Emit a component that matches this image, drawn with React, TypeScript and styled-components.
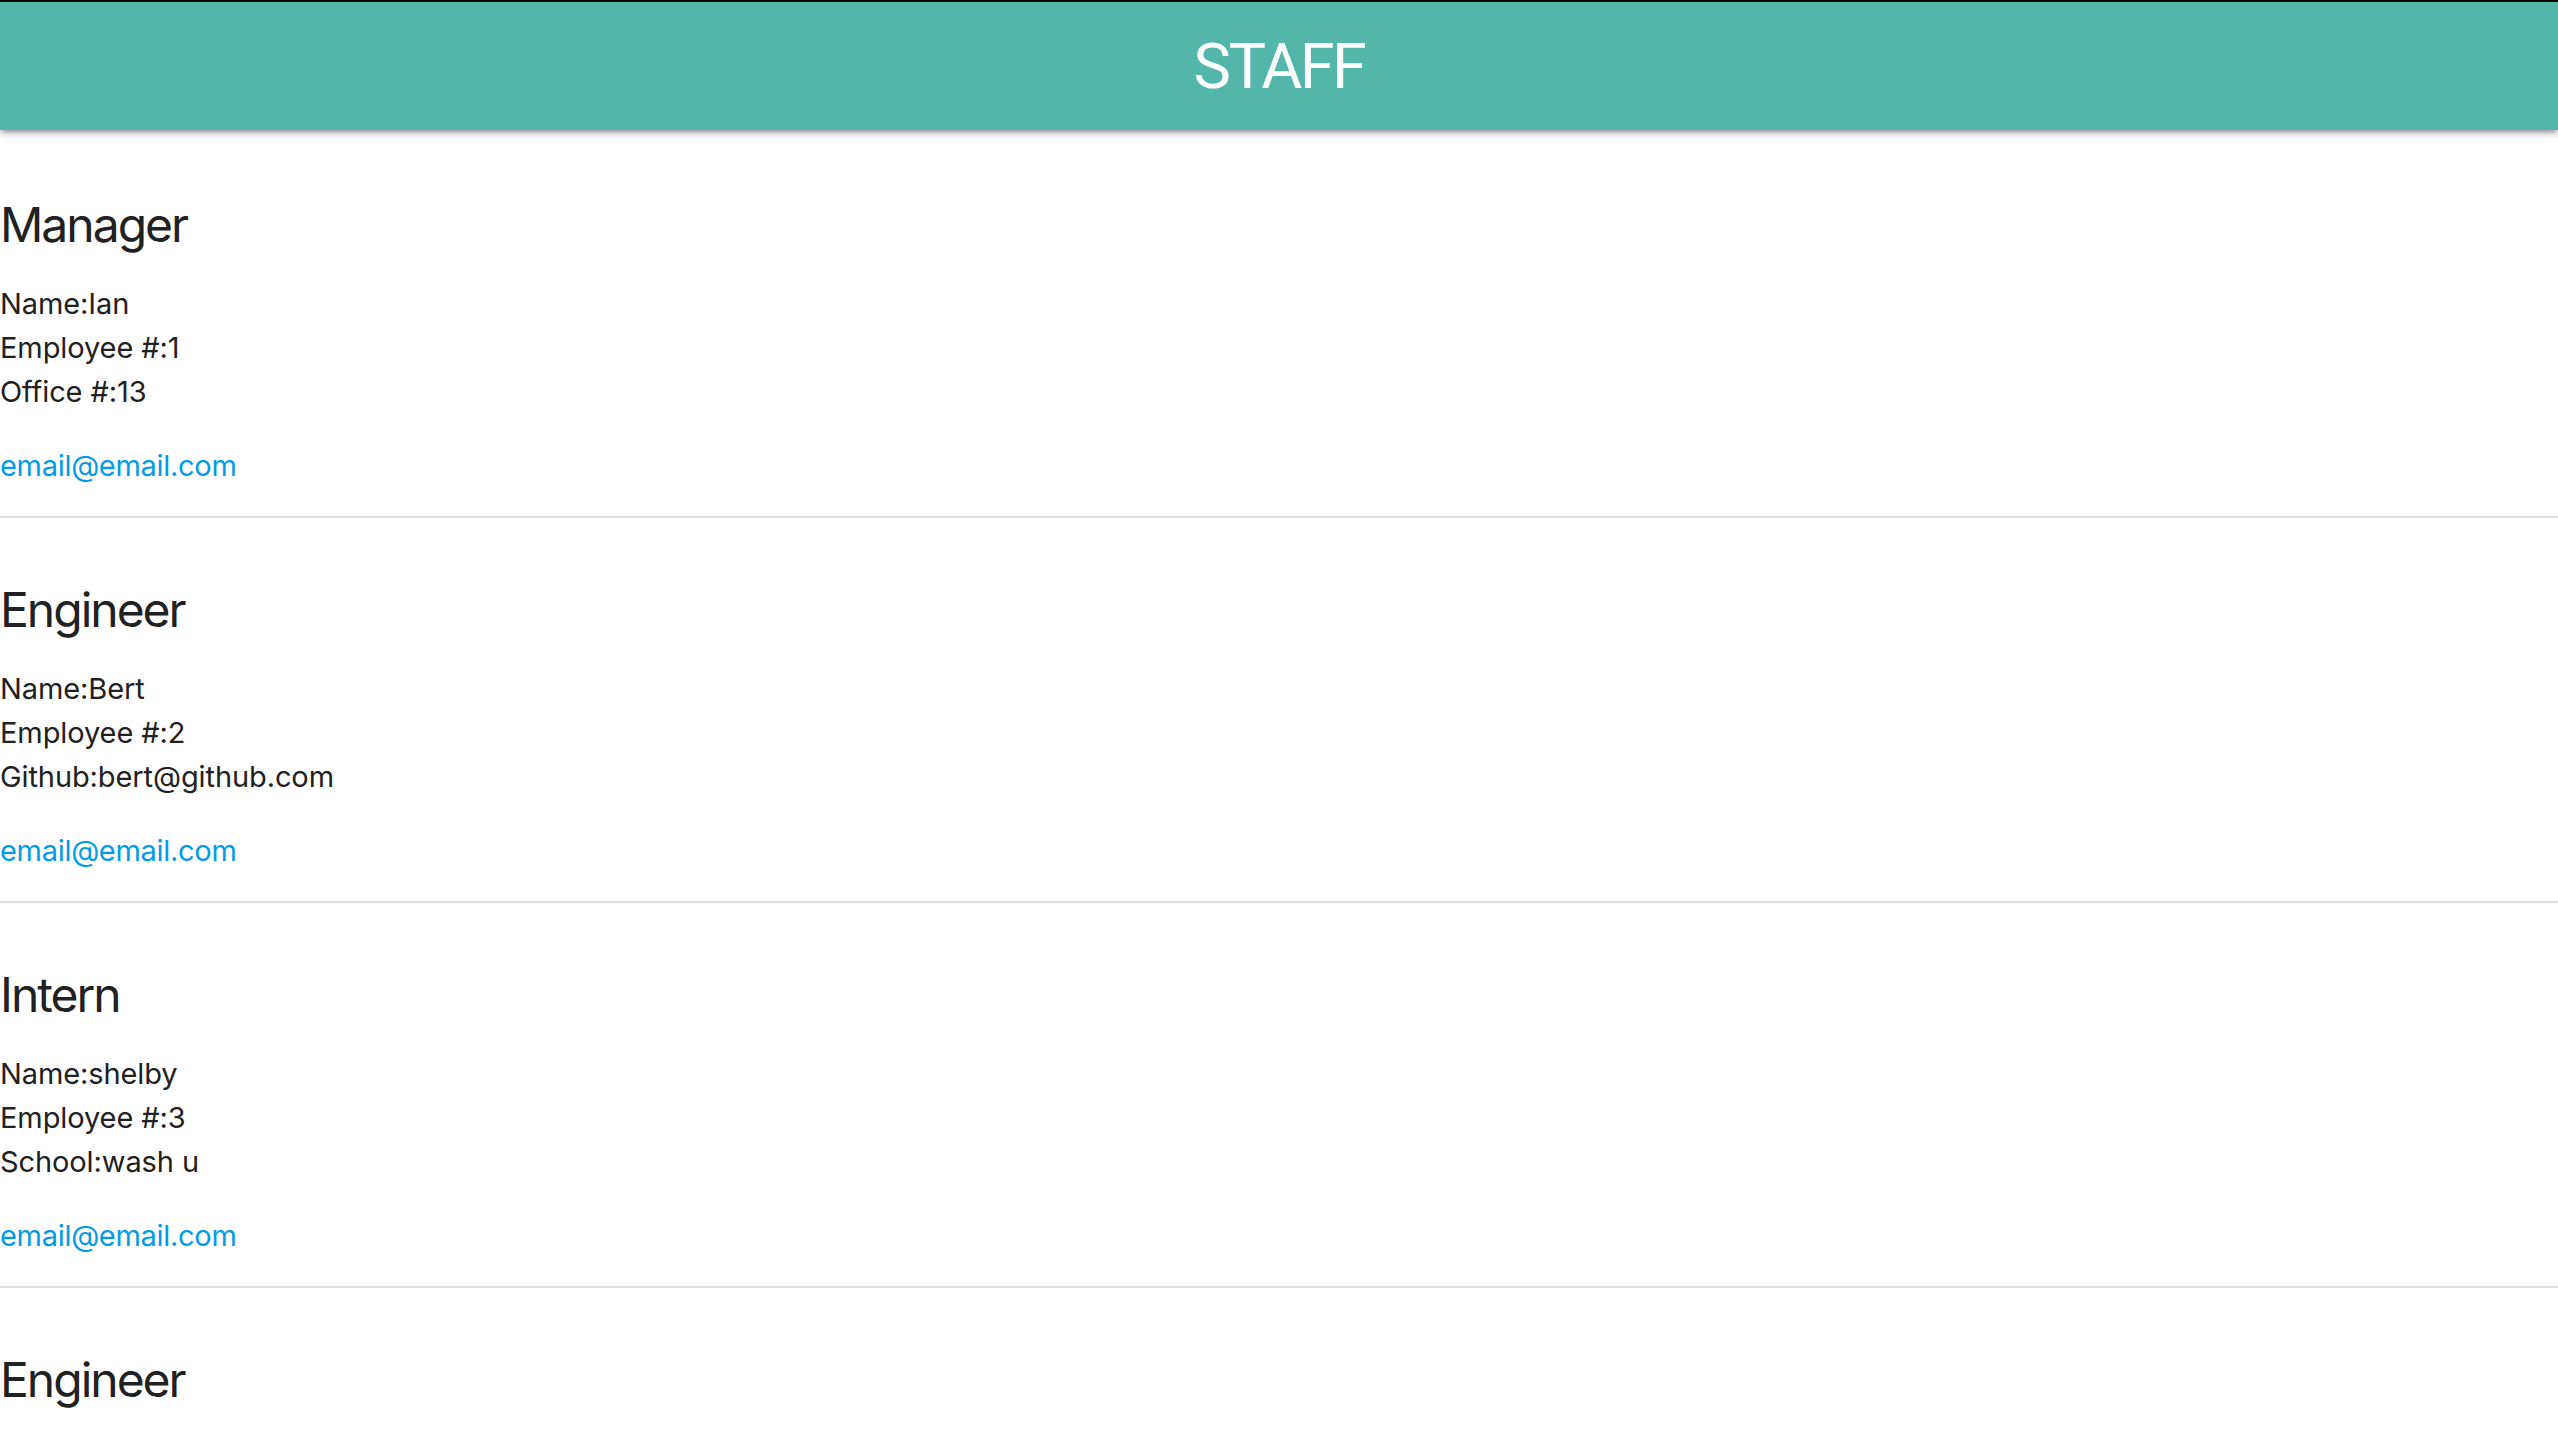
import React from "react";
import styled, { createGlobalStyle } from "styled-components";

const GlobalStyle = createGlobalStyle`
  html, body {
    margin: 0;
    padding: 0;
    background: #ffffff;
  }
  body {
    font-family: Inter, "Noto Sans", "Liberation Sans", sans-serif;
    color: rgba(0, 0, 0, 0.87);
  }
`;

const Page = styled.div`
  display: flex;
  flex-direction: column;
  min-height: 1438px;
`;

const Nav = styled.header`
  height: 128px;
  border-top: 2px solid #000000;
  background: #52b6ab;
  display: flex;
  align-items: center;
  justify-content: center;
  box-shadow: 0 4px 4px 0 rgba(0, 0, 0, 0.14), 0 6px 2px -4px rgba(0, 0, 0, 0.12),
    0 2px 10px 0 rgba(0, 0, 0, 0.2);
  position: relative;
  z-index: 1;
`;

const Brand = styled.h1`
  margin: 0;
  color: #ffffff;
  font-family: Roboto, "Liberation Sans", sans-serif;
  font-weight: 400;
  font-size: 63px;
  letter-spacing: -2.5px;
  line-height: 1;
`;

const Main = styled.main`
  display: flex;
  flex-direction: column;
  padding-top: 3px;
`;

const Section = styled.section`
  padding-top: 65px;
  padding-bottom: 28px;
  display: flex;
  flex-direction: column;
`;

const Role = styled.h5`
  margin: 0 0 30px;
  font-size: 48px;
  font-weight: 400;
  line-height: 54px;
  letter-spacing: -2px;
  color: #212121;
`;

const Details = styled.div`
  display: flex;
  flex-direction: column;
  margin-bottom: 30px;
`;

const Line = styled.div`
  font-size: 29px;
  line-height: 44px;
  letter-spacing: -0.1px;
  color: #212121;
`;

const EmailLink = styled.a`
  font-size: 29px;
  line-height: 44px;
  letter-spacing: -0.3px;
  color: #039be5;
  text-decoration: none;
  align-self: flex-start;
`;

const Divider = styled.hr`
  margin: 0;
  border: 0;
  height: 2px;
  background: #e0e0e0;
`;

type Employee = {
  role: string;
  lines: string[];
  email: string;
};

const staff: Employee[] = [
  { role: "Manager", lines: ["Name:Ian", "Employee #:1", "Office #:13"], email: "email@email.com" },
  { role: "Engineer", lines: ["Name:Bert", "Employee #:2", "Github:bert@github.com"], email: "email@email.com" },
  { role: "Intern", lines: ["Name:shelby", "Employee #:3", "School:wash u"], email: "email@email.com" },
  { role: "Engineer", lines: ["Name:Jon", "Employee #:4", "Github:jon@github.com"], email: "email@email.com" },
];

export default function App() {
  return (
    <Page>
      <GlobalStyle />
      <Nav>
        <Brand>STAFF</Brand>
      </Nav>
      <Main>
        {staff.map((e, i) => (
          <React.Fragment key={i}>
            <Section>
              <Role>{e.role}</Role>
              <Details>
                {e.lines.map((l) => (
                  <Line key={l}>{l}</Line>
                ))}
              </Details>
              <EmailLink href={`mailto:${e.email}`}>{e.email}</EmailLink>
            </Section>
            <Divider />
          </React.Fragment>
        ))}
      </Main>
    </Page>
  );
}
